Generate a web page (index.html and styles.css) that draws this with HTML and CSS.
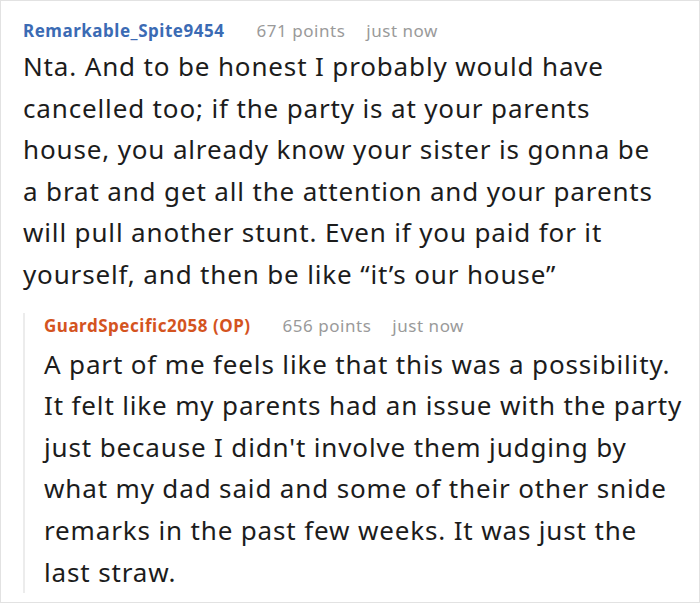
FILE: index.html
```html
<!DOCTYPE html>
<html>
<head>
<meta charset="utf-8">
<link rel="stylesheet" href="styles.css">
</head>
<body>
<div class="thread">
  <div class="comment">
    <div class="meta">
      <span class="author">Remarkable_Spite9454</span>
      <span class="points">671 points</span>
      <span class="time">just now</span>
    </div>
    <p class="body">Nta. And to be honest I probably would have<br>cancelled too; if the party is at your parents<br>house, you already know your sister is gonna be<br>a brat and get all the attention and your parents<br>will pull another stunt. Even if you paid for it<br>yourself, and then be like “it’s our house”</p>
    <div class="reply">
      <div class="meta">
        <span class="author op">GuardSpecific2058 (OP)</span>
        <span class="points">656 points</span>
        <span class="time">just now</span>
      </div>
      <p class="body">A part of me feels like that this was a possibility.<br>It felt like my parents had an issue with the party<br>just because I didn't involve them judging by<br>what my dad said and some of their other snide<br>remarks in the past few weeks. It was just the<br>last straw.</p>
    </div>
  </div>
</div>
</body>
</html>
```
FILE: styles.css
```css
html, body { margin: 0; padding: 0; background: #fff; }
.thread {
  box-sizing: border-box;
  width: 700px;
  height: 603px;
  border: 1px solid #e2e2e2;
  font-family: "Noto Sans", "Open Sans", sans-serif;
  color: #1c1c1c;
  letter-spacing: 0.033em;
  overflow: hidden;
}
.comment { padding: 17px 0 0 22px; }
.meta { display: flex; gap: 32px; font-size: 17px; line-height: 26px; }
.author { font-weight: 700; color: #3b6bb4; }
.author.op { color: #d4541f; }
.points, .time { color: #9a9a9a; }
.meta .points + .time { margin-left: -11px; }
.body { margin: 2px 0 0; font-size: 26px; line-height: 41.6px; letter-spacing: 0.85px; white-space: nowrap; }
.reply { margin-top: 17px; border-left: 2px solid #ececec; padding-left: 19px; }
.reply .body { margin-top: 5px; }
```
